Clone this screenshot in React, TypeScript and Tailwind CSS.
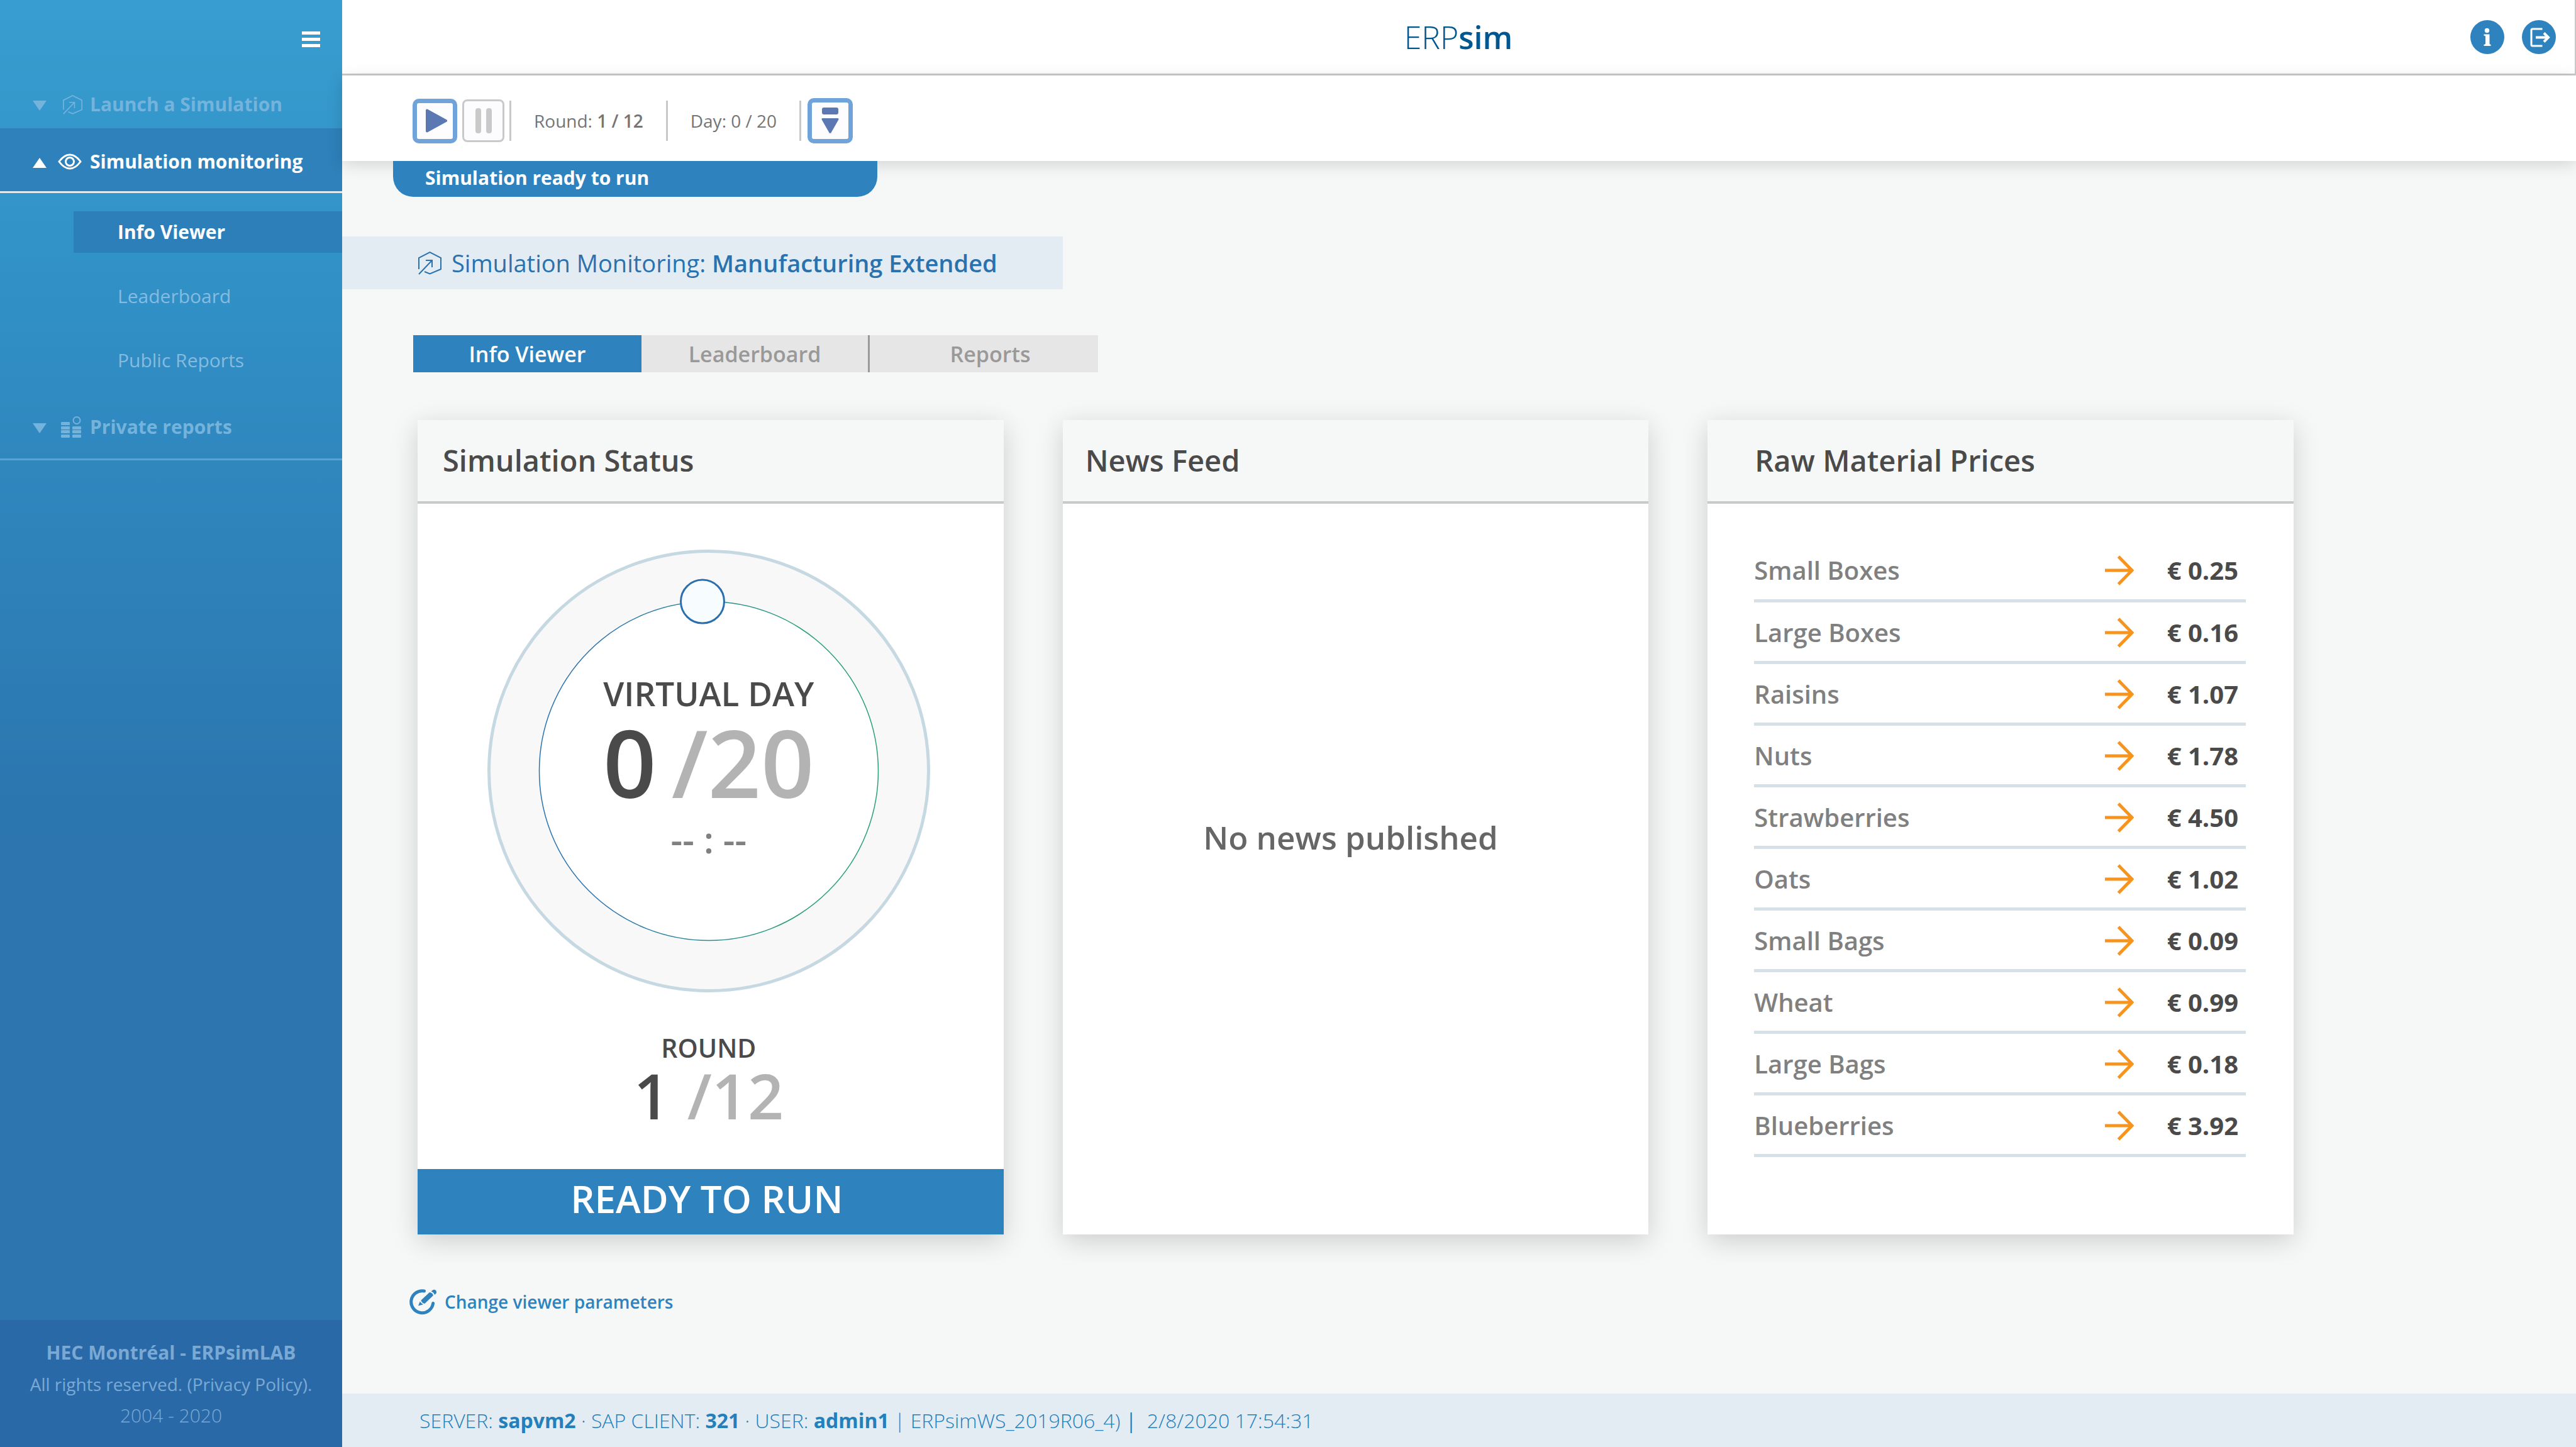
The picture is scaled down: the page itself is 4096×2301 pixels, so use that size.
import React from "react";

const materials = [
  { name: "Small Boxes", price: "€ 0.25" },
  { name: "Large Boxes", price: "€ 0.16" },
  { name: "Raisins", price: "€ 1.07" },
  { name: "Nuts", price: "€ 1.78" },
  { name: "Strawberries", price: "€ 4.50" },
  { name: "Oats", price: "€ 1.02" },
  { name: "Small Bags", price: "€ 0.09" },
  { name: "Wheat", price: "€ 0.99" },
  { name: "Large Bags", price: "€ 0.18" },
  { name: "Blueberries", price: "€ 3.92" },
];

function SimulationIcon({ className }: { className?: string }) {
  return (
    <svg viewBox="0 0 37 37" fill="none" stroke="currentColor" strokeWidth="2" className={className} aria-hidden="true">
      <path d="M1 28V10L18.500 1.200L36 10V28L18.500 35.500L10 32" />
      <path d="M1 36L22 14M12 14H22V25" />
    </svg>
  );
}

function EyeIcon() {
  return (
    <svg viewBox="0 0 38 26" fill="none" stroke="currentColor" strokeWidth="3" className="h-[26px] w-[38px]" aria-hidden="true">
      <path d="M2 13C7 6 12 2 19 2S31 6 36 13C31 20 26 24 19 24S7 20 2 13Z" />
      <circle cx="19" cy="13" r="6.500" />
    </svg>
  );
}

function ReportsIcon() {
  return (
    <svg viewBox="0 0 32 34" fill="currentColor" className="h-[34px] w-8" aria-hidden="true">
      <rect x="0" y="9" width="14" height="5" rx="1" />
      <rect x="0" y="16" width="14" height="5" rx="1" />
      <rect x="0" y="22" width="14" height="5" rx="1" />
      <rect x="0" y="29" width="14" height="5" rx="1" />
      <rect x="18" y="16" width="14" height="5" rx="1" />
      <rect x="18" y="22" width="14" height="5" rx="1" />
      <rect x="18" y="29" width="14" height="5" rx="1" />
      <circle cx="25" cy="6.500" r="5.500" fill="none" stroke="currentColor" strokeWidth="2" />
    </svg>
  );
}

function Caret({ up }: { up?: boolean }) {
  return (
    <svg viewBox="0 0 22 20" fill="currentColor" className="h-5 w-[22px]" aria-hidden="true">
      <path d={up ? "M0 20L11 4L22 20Z" : "M0 4H22L11 20Z"} />
    </svg>
  );
}

function InfoIcon() {
  return (
    <svg viewBox="0 0 54 54" className="size-[54px]" aria-hidden="true">
      <circle cx="27" cy="27" r="27" fill="#2e83bf" />
      <circle cx="26.500" cy="16.500" r="3.700" fill="#fff" />
      <path d="M21.500 22.500H30.500V38L32.500 39V41H21.500V39L24 38V25.500L21.500 24.500Z" fill="#fff" />
    </svg>
  );
}

function ExitIcon() {
  return (
    <svg viewBox="0 0 54 54" className="size-[54px]" fill="none" stroke="#fff" strokeWidth="3" aria-hidden="true">
      <circle cx="27" cy="27" r="27" fill="#2e83bf" stroke="none" />
      <path d="M32.500 14H17Q15 14 15 16V39Q15 41 17 41H32.500" />
      <path d="M22 27.500H42" strokeWidth="4" />
      <path d="M35 20.500L42 27.500L35 34.500" strokeWidth="4" />
    </svg>
  );
}

function EditIcon() {
  return (
    <svg viewBox="0 0 44 41" className="h-[41px] w-11" fill="#2e83bf" aria-hidden="true">
      <path d="M23.500 3A17.500 17.500 0 1 0 37.600 22.500" fill="none" stroke="#2e83bf" strokeWidth="5" strokeLinecap="round" />
      <path d="M18.400 17.800L32 5Q36.500 5.500 38 10L24.300 23Q20 22.500 18.400 17.800Z" />
      <path d="M14 26.600L16.800 19.500Q18.500 23 22 24.200Z" />
      <path d="M34.500 3.500L37 1.500Q39.500 0 42 2Q44 4.500 42.800 6.500L40 9Q39 5 34.500 3.500Z" />
    </svg>
  );
}

function ArrowIcon() {
  return (
    <svg viewBox="0 0 46 48" className="block h-12 w-[46px]" fill="none" stroke="#f7941e" strokeWidth="5" aria-hidden="true">
      <path d="M0 24H42M21.500 2L43 24L21.500 46" />
    </svg>
  );
}

function NavButton({ children, className }: { children: React.ReactNode; className?: string }) {
  return <button className={"flex w-full items-center text-left font-bold " + (className ?? "")}>{children}</button>;
}

function Sidebar() {
  return (
    <aside className="flex w-[544px] shrink-0 flex-col bg-[linear-gradient(to_bottom,#389dd0_0%,#3192c7_18%,#2f87be_32%,#2c76b0_55%,#2c74ae_100%)] text-[30px] leading-10 text-[#74b3dc]">
      <button className="mt-[50px] mr-[35px] flex flex-col gap-[5px] self-end" aria-label="Toggle menu">
        <span className="h-[5px] w-[29px] bg-white" />
        <span className="h-[5px] w-[29px] bg-white" />
        <span className="h-[5px] w-[29px] bg-white" />
      </button>
      <nav className="mt-[49px]">
        <NavButton className="h-20 pt-1">
          <span className="ml-[52px] w-12"><Caret /></span>
          <SimulationIcon className="mr-3 size-[31px]" />
          Launch a Simulation
        </NavButton>
        <NavButton className="h-[103px] border-b-[3px] border-[#dfe9f0] bg-[#2e81bb] pt-1.5 text-white">
          <span className="ml-[52px] w-10"><Caret up /></span>
          <span className="mr-[13px]"><EyeIcon /></span>
          Simulation monitoring
        </NavButton>
        <ul className="flex flex-col gap-9 pt-[29px] pl-[117px]">
          <li>
            <a href="#info" className="flex h-[66px] items-center bg-[#2d7fb9] pl-[70px] font-bold text-white">Info Viewer</a>
          </li>
          <li>
            <a href="#leaderboard" className="flex h-[66px] items-center pl-[70px] text-[#84bce1]">Leaderboard</a>
          </li>
          <li>
            <a href="#public" className="flex h-[66px] items-center pl-[70px] text-[#84bce1]">Public Reports</a>
          </li>
        </ul>
        <NavButton className="mt-[18px] h-[108px] border-b-[3px] border-[#5ba3d2] pt-1">
          <span className="ml-[52px] w-[45px]"><Caret /></span>
          <span className="mr-[14px]"><ReportsIcon /></span>
          Private reports
        </NavButton>
      </nav>
      <div className="mt-auto flex h-[202px] flex-col items-center bg-[#2a69a8] pt-[27px] leading-[50px] text-[#7aa9d4]">
        <p className="font-bold">HEC Montréal - ERPsimLAB</p>
        <p className="text-[28px]">
          All rights reserved. (<a href="#privacy">Privacy Policy</a>).
        </p>
        <p className="font-light">2004 - 2020</p>
      </div>
    </aside>
  );
}

function Divider() {
  return <span className="h-16 w-[3px] bg-[#c9c9c9]" />;
}

function Toolbar() {
  return (
    <div className="flex h-[136px] items-center bg-white pt-2 pl-28 text-[28px] text-[#757575] shadow-[0_6px_24px_rgba(0,0,0,0.14)]">
      <button aria-label="Play" className="flex size-[71px] items-center justify-center rounded-[10px] border-[7px] border-[#6fa3da] bg-[#fdfdff]">
        <svg viewBox="0 0 34 38" className="ml-1 h-[38px] w-[34px]" fill="#5b78b2" stroke="#5b78b2" strokeWidth="4" strokeLinejoin="round" aria-hidden="true">
          <path d="M2 2.500V35.500L32 19Z" />
        </svg>
      </button>
      <button aria-label="Pause" className="ml-2 flex h-[68px] w-[67px] items-center justify-center gap-2 rounded-[8px] border-[3px] border-[#c9c9c9] bg-[#fcfcfe]">
        <span className="h-10 w-[9px] rounded-[4px] bg-[#c9c9c9]" />
        <span className="h-10 w-[9px] rounded-[4px] bg-[#c9c9c9]" />
      </button>
      <div className="ml-2 flex items-center">
        <Divider />
        <span className="mx-9">
          Round: <span className="font-semibold">1 / 12</span>
        </span>
        <Divider />
        <span className="mx-9">Day: 0 / 20</span>
        <Divider />
      </div>
      <button aria-label="Next step" className="ml-2.5 flex size-[72px] items-center justify-center rounded-[10px] border-[7px] border-[#6fa3da] bg-[#fdfdff]">
        <svg viewBox="0 0 28 42" className="h-[42px] w-7" fill="#5b78b2" aria-hidden="true">
          <rect x="1" y="0" width="26" height="11" rx="3" />
          <path d="M2 17H26Q28 17 27.500 19L15.500 40Q14 42 12.500 40L0.500 19Q0 17 2 17Z" />
        </svg>
      </button>
    </div>
  );
}

function Card({ title, pad, children }: { title: string; pad: string; children: React.ReactNode }) {
  return (
    <section className="flex flex-col bg-white shadow-[0_10px_40px_rgba(0,0,0,0.17)]">
      <h2 className={"h-[133px] border-b-4 border-[#c8caca] bg-[#f6f8f8] text-[47px] leading-[128px] font-semibold text-[#4a4a4a] " + pad}>
        {title}
      </h2>
      {children}
    </section>
  );
}

function StatusCard() {
  return (
    <Card title="Simulation Status" pad="pl-10">
      <div className="flex grow flex-col items-center pt-[73px] pr-1.5 font-semibold text-[#4a4a4a]">
        <div className="grid">
          <svg viewBox="0 0 704 704" className="col-start-1 row-start-1 size-[704px]" aria-hidden="true">
            <defs>
              <linearGradient id="ring" x1="0" x2="1" y1="0" y2="0">
                <stop offset="0.200" stopColor="#2a72ae" />
                <stop offset="0.800" stopColor="#2aa175" />
              </linearGradient>
            </defs>
            <circle cx="352" cy="352" r="349.500" fill="#f8f8f8" stroke="#c6d8e1" strokeWidth="5" />
            <circle cx="352" cy="352" r="269.500" fill="#fff" stroke="url(#ring)" strokeWidth="1.500" />
            <circle cx="342" cy="82.500" r="34.500" fill="#f7fcff" stroke="#2a6fae" strokeWidth="3" />
          </svg>
          <div className="col-start-1 row-start-1 flex flex-col items-center pt-[199px]">
            <h3 className="text-[53px] leading-[60px]">VIRTUAL DAY</h3>
            <p className="mt-1 flex gap-6 text-[148px] leading-[150px]">
              <span>0</span>
              <span className="text-[#b3b3b3]">/20</span>
            </p>
            <p className="mt-[18px] text-[58px] leading-[60px] text-[#808080]">-- : --</p>
          </div>
        </div>
        <h3 className="mt-[64px] text-[41px] leading-[48px]">ROUND</h3>
        <p className="flex gap-7 text-[100px] leading-[102px]">
          <span>1</span>
          <span className="text-[#b3b3b3]">/12</span>
        </p>
      </div>
      <p className="mt-[67px] h-[104px] bg-[#2e83bf] pr-3 text-center text-[60px] leading-[94px] font-semibold text-white">READY TO RUN</p>
    </Card>
  );
}

function PricesCard() {
  return (
    <Card title="Raw Material Prices" pad="pl-[75px]">
      <div className="pt-14 pr-[76px] pl-[74px]">
        <table className="w-full text-[40px] leading-[48px] text-[#808080]">
          <tbody>
            {materials.map((m) => (
              <tr key={m.name} className="h-[98px] border-b-[5px] border-[#d5e1e8]">
                <th scope="row" className="pt-1 text-left font-semibold">{m.name}</th>
                <td className="w-[92px] pt-1"><ArrowIcon /></td>
                <td className="w-[132px] pt-1 pr-3 text-right font-bold whitespace-nowrap text-[#4a4a4a]">{m.price}</td>
              </tr>
            ))}
          </tbody>
        </table>
      </div>
    </Card>
  );
}

export default function App() {
  return (
    <div className="flex min-h-screen bg-[#f5f8f7] font-['Open_Sans',sans-serif]">
      <Sidebar />
      <div className="flex min-w-0 grow flex-col">
        <header className="grid h-[120px] grid-cols-3 items-center border-r-2 border-b-[3px] border-[#c9c9c9] bg-white">
          <h1 className="col-start-2 text-center text-[50px] leading-[60px] font-light text-[#00568f]">
            ERP<span className="font-semibold">sim</span>
          </h1>
          <div className="flex justify-end gap-7 pr-[30px]">
            <button aria-label="Information"><InfoIcon /></button>
            <button aria-label="Log out"><ExitIcon /></button>
          </div>
        </header>
        <Toolbar />
        <div className="ml-[81px] h-[57px] w-[770px] rounded-b-[32px] bg-[#2e83bf] pl-[51px] text-[30px] leading-[54px] font-bold text-white">
          Simulation ready to run
        </div>
        <div className="mt-[63px] flex h-[84px] w-[1146px] items-center bg-[#e4ecf3] pl-[121px] text-[38px] text-[#2a72ae]">
          <SimulationIcon className="mr-4 size-[37px]" />
          <h2>
            Simulation Monitoring: <span className="font-semibold">Manufacturing Extended</span>
          </h2>
        </div>
        <div role="tablist" className="mt-[73px] ml-[113px] grid h-[59px] w-[1089px] grid-cols-3 bg-[#e6e6e6] text-[34px] leading-[54px] font-semibold text-[#999]">
          <button role="tab" aria-selected="true" className="bg-[#2e83bf] text-white">Info Viewer</button>
          <button role="tab" aria-selected="false" className="border-r-[3px] border-[#999]">Leaderboard</button>
          <button role="tab" aria-selected="false" className="pl-5">Reports</button>
        </div>
        <main className="mt-[76px] mr-[449px] ml-[120px] grid grid-cols-3 gap-[94px]">
          <StatusCard />
          <Card title="News Feed" pad="pl-9">
            <p className="flex grow items-center justify-center pr-4 pb-[102px] text-[51px] font-semibold text-[#666]">No news published</p>
          </Card>
          <PricesCard />
        </main>
        <a href="#parameters" className="mt-[86px] ml-[107px] flex items-center gap-3 self-start text-[28px] font-semibold text-[#2e83bf]">
          <EditIcon />
          Change viewer parameters
        </a>
        <footer className="mt-auto flex h-[85px] items-center bg-[#e4ecf3] pl-[123px] text-[32px] font-light whitespace-pre text-[#2480bb]">
          <p>
            SERVER: <span className="font-bold">sapvm2</span> · SAP CLIENT: <span className="font-bold">321</span> · USER:{" "}
            <span className="font-bold">admin1</span> | ERPsimWS_2019R06_4) <span className="font-normal">|</span>{"  "}2/8/2020 17:54:31
          </p>
        </footer>
      </div>
    </div>
  );
}
